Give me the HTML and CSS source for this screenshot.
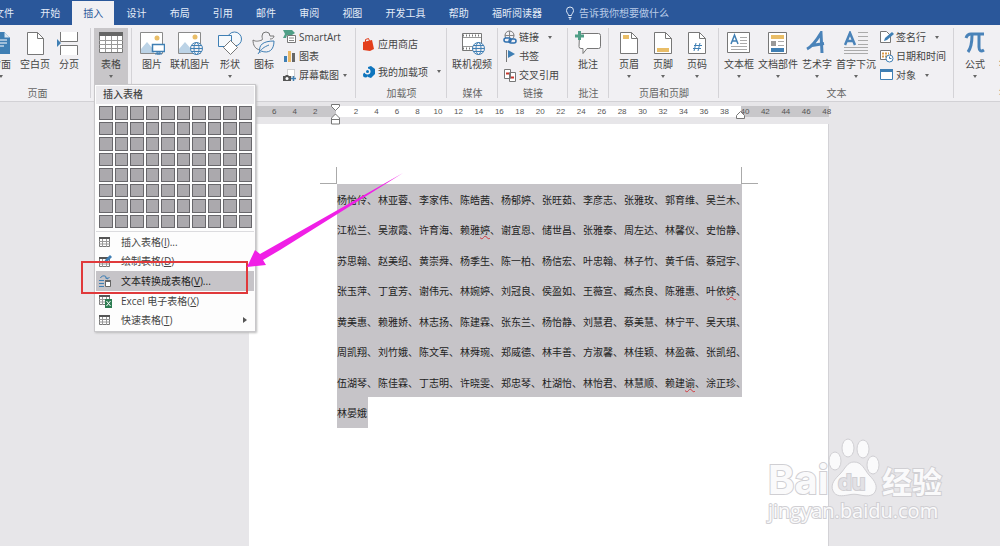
FILE: index.html
```html
<!DOCTYPE html>
<html lang="zh-CN">
<head>
<meta charset="utf-8">
<title>插入表格</title>
<link rel="stylesheet" href="styles.css">
</head>
<body>
<div class="app">
  <header class="titlebar">
    <nav class="tabs">
      <button class="tab tab-file">文件</button>
      <button class="tab">开始</button>
      <button class="tab tab-active">插入</button>
      <button class="tab">设计</button>
      <button class="tab">布局</button>
      <button class="tab">引用</button>
      <button class="tab">邮件</button>
      <button class="tab">审阅</button>
      <button class="tab">视图</button>
      <button class="tab">开发工具</button>
      <button class="tab">帮助</button>
      <button class="tab">福昕阅读器</button>
    </nav>
    <label class="tell">
      <svg width="10" height="14" viewBox="0 0 10 14" fill="none" stroke="#dfe8f6"><path d="M3.500 9.500C3.500 7.500 1.500 7 1.500 4.500a3.500 3.500 0 0 1 7 0C8.500 7 6.500 7.500 6.500 9.500zM3.500 11.500h3M4 13h2"/></svg>
      <input class="tell-input" type="text" placeholder="告诉我你想要做什么" aria-label="告诉我你想要做什么">
    </label>
  </header>

  <div class="ribbon">
    <section class="group g-pages">
      <div class="tools">
        <button class="big w34">
          <svg width="24" height="24" viewBox="0 0 24 24"><path d="M3 1h12l6 6v16H3z" fill="#3f7fb4"/><path d="M15 1v6h6" fill="#dbe8f3" stroke="#3f7fb4"/><path d="M6 9h12M6 12h12M6 15h9" stroke="#fff"/></svg>
          <span>封面</span><i class="caret"></i></button>
        <button class="big w34">
          <svg width="24" height="24" viewBox="0 0 24 24"><path d="M4.500 1.500h10l6 6v16h-16z" fill="#fff" stroke="#777"/><path d="M14.500 1.500v6h6" fill="none" stroke="#777"/></svg>
          <span>空白页</span></button>
        <button class="big w34">
          <svg width="24" height="24" viewBox="0 0 24 24"><path d="M4 1h17v9H4zM4 15h17v9H4z" fill="#fff"/><path d="M3.500 1v9.500h17V1M3.500 24v-9.500h17V24" fill="none" stroke="#777"/><path d="M0 8l4 4-4 4z" fill="#3f7fb4"/></svg>
          <span>分页</span></button>
      </div>
      <div class="caption">页面</div>
    </section>

    <section class="group g-table">
      <div class="tools">
        <button class="big w34 pressed" aria-expanded="true">
          <svg width="24" height="24" viewBox="0 0 24 24"><path d="M.5 1.500h23v20H.5z" fill="#fff" stroke="#777"/><path d="M0 1h24v4H0z" fill="#666"/><path d="M0 9.500h24M0 13.500h24M0 17.500h24M6.500 5v16M12.500 5v16M18.500 5v16" stroke="#999"/></svg>
          <span>表格</span><i class="caret"></i></button>
      </div>

      <div class="menu">
        <div class="menu-title">插入表格</div>
        <div class="picker" role="grid" aria-label="插入表格">
          <i></i><i></i><i></i><i></i><i></i><i></i><i></i><i></i><i></i><i></i>
          <i></i><i></i><i></i><i></i><i></i><i></i><i></i><i></i><i></i><i></i>
          <i></i><i></i><i></i><i></i><i></i><i></i><i></i><i></i><i></i><i></i>
          <i></i><i></i><i></i><i></i><i></i><i></i><i></i><i></i><i></i><i></i>
          <i></i><i></i><i></i><i></i><i></i><i></i><i></i><i></i><i></i><i></i>
          <i></i><i></i><i></i><i></i><i></i><i></i><i></i><i></i><i></i><i></i>
          <i></i><i></i><i></i><i></i><i></i><i></i><i></i><i></i><i></i><i></i>
          <i></i><i></i><i></i><i></i><i></i><i></i><i></i><i></i><i></i><i></i>
        </div>
        <div class="menu-list">
          <button class="item">
            <svg width="14" height="14" viewBox="0 0 14 14"><path d="M1.500 2.500h10v9h-10z" fill="#fff" stroke="#777"/><path d="M1 2h11v2H1z" fill="#555"/><path d="M1 6.500h11M1 9h11M4.500 4v8M8.500 4v8" stroke="#999"/></svg>
            <span>插入表格(<u>I</u>)...</span></button>
          <button class="item">
            <svg width="14" height="14" viewBox="0 0 14 14"><path d="M1.500 3.500h10v9h-10z" fill="#fff" stroke="#777"/><path d="M1 3h9v2H1z" fill="#555"/><path d="M1 7.500h10M1 10h10M4.500 5v8M8.500 5v8" stroke="#999"/><path d="M6 9l1-3 5-5 2 2-5 5z" fill="#3f7fb4"/></svg>
            <span>绘制表格(<u>D</u>)</span></button>
          <button class="item item-active">
            <svg width="14" height="14" viewBox="0 0 14 14"><path d="M1 6.500h5M1 9.500h5M1 12.500h5" stroke="#3f7fb4"/><path d="M2.500 4c1-3 6-3 7 1M9.500 5L7 3.500M9.500 5L11.500 3" fill="none" stroke="#3f7fb4"/><path d="M7.500 6.500h5v6h-5z" fill="#fff" stroke="#666"/><path d="M7 6h6v2H7z" fill="#666"/></svg>
            <span>文本转换成表格(<u>V</u>)...</span></button>
          <button class="item">
            <svg width="14" height="14" viewBox="0 0 14 14"><path d="M1.500 1.500h10v9h-10z" fill="#fff" stroke="#777"/><path d="M1 1h11v2H1z" fill="#555"/><path d="M1 5.500h11M1 8h11M4.500 3v8M8.500 3v8" stroke="#999"/><path d="M7 5h7v9H7z" fill="#2d7d52"/><path d="M8.500 7l4 5M12.500 7l-4 5" stroke="#fff"/></svg>
            <span>Excel 电子表格(<u>X</u>)</span></button>
          <button class="item">
            <svg width="14" height="14" viewBox="0 0 14 14"><path d="M1.500 2.500h10v9h-10z" fill="#fff" stroke="#777"/><path d="M1 2h11v2H1z" fill="#555"/><path d="M1 6.500h11M1 9h11M4.500 4v8M8.500 4v8" stroke="#999"/></svg>
            <span>快速表格(<u>T</u>)</span><i class="more"></i></button>
        </div>
        <div class="highlight"></div>
      </div>
    </section>

    <section class="group g-illus">
      <div class="tools">
        <button class="big w32">
          <svg width="26" height="24" viewBox="0 0 26 24"><path d="M1.500 1.500h22v21h-22z" fill="#fff" stroke="#8a8a8a"/><path d="M2 22v-4l6-7 7 8v3z" fill="#bcd3e6"/><circle cx="18" cy="7" r="2.500" fill="#e9bd67"/><path d="M13.500 13.500h12v7h-12z" fill="#fff" stroke="#3f7fb4" stroke-width="1.500"/><path d="M18 21h3v2h-3zM16 23h7" stroke="#3f7fb4" fill="none"/></svg>
          <span>图片</span></button>
        <button class="big w44">
          <svg width="26" height="24" viewBox="0 0 26 24"><path d="M1.500 1.500h22v21h-22z" fill="#fff" stroke="#8a8a8a"/><path d="M2 22v-4l6-7 7 8v3z" fill="#bcd3e6"/><circle cx="18" cy="6" r="2.500" fill="#e9bd67"/><g fill="#f1f0f3" stroke="#3f7fb4"><circle cx="19.500" cy="17.500" r="6"/><ellipse cx="19.500" cy="17.500" rx="2.500" ry="6" fill="none"/><path d="M13.500 17.500h12M14.500 14.500h10M14.500 20.500h10" fill="none"/></g></svg>
          <span>联机图片</span></button>
        <button class="big w36">
          <svg width="26" height="24" viewBox="0 0 26 24" fill="#f5f8fb" stroke="#3f7fb4"><circle cx="17.500" cy="8" r="7"/><path d="M1.500 4.500h13v11h-13z"/><path d="M13.500 9.500l7 7-7 7-7-7z" stroke="#777" fill="#fff"/></svg>
          <span>形状</span><i class="caret"></i></button>
        <button class="big w32">
          <svg width="26" height="24" viewBox="0 0 26 24" fill="none"><path d="M2 9c3 2 6 1 9 0 1-1 0-2 0-4a4 4 0 0 1 8 0h4c0 2-2 3-4 3M2 9c0 5 2 9 7 10" stroke="#777"/><path d="M9 22c-2-8 3-12 14-12 0 9-5 13-13 10M7 23c3-5 6-7 11-9" stroke="#3f7fb4"/></svg>
          <span>图标</span></button>
        <div class="rows">
          <button class="small"><svg width="14" height="14" viewBox="0 0 14 14"><path d="M0 0h9l3 3-3 2H4l-1 3H0l2-4z" fill="#4f9e86"/><path d="M4.500 5.500h8v7h-8z" fill="#fff" stroke="#777"/><path d="M6 8h5M6 10.500h5" stroke="#888"/></svg><span>SmartArt</span></button>
          <button class="small"><svg width="14" height="14" viewBox="0 0 14 14"><path d="M1 7h3v6H1z" fill="#3f7fb4"/><path d="M5 2h3v11H5z" fill="#e9b866"/><path d="M9 4h3v9H9z" fill="#666"/></svg><span>图表</span></button>
          <button class="small"><svg width="14" height="14" viewBox="0 0 14 14"><path d="M4.500 1.500h7v7h-7z" fill="#fff" stroke="#aaa" stroke-dasharray="1 1"/><path d="M0 8h2l1-1h2l1 1h2v5H0z" fill="#555"/><circle cx="4" cy="10.500" r="1.500" fill="#fff"/><path d="M8 10.500h5M10.500 8v5" stroke="#3f7fb4" stroke-width="1.500"/></svg><span>屏幕截图</span><i class="caret"></i></button>
        </div>
      </div>
    </section>

    <section class="group g-addins">
      <div class="tools">
        <div class="rows rows-two">
          <button class="small"><svg width="14" height="14" viewBox="0 0 14 14"><path d="M1 5l9-2 2 9-4 2-7-1z" fill="#e33e1b"/><path d="M3.500 5V2.500l3-1 1 2.500" fill="none" stroke="#e33e1b"/></svg><span>应用商店</span></button>
          <button class="small"><svg width="14" height="14" viewBox="0 0 14 14" fill="#0f75bd"><path d="M6 2l3-1 4 3v5l-4 4-3-1z"/><circle cx="3.500" cy="10" r="2.500"/><circle cx="5.500" cy="6.500" r="3" fill="#f1f0f3"/><circle cx="5.500" cy="6.500" r="1.500"/></svg><span>我的加载项</span><i class="caret caret-far"></i></button>
        </div>
      </div>
      <div class="caption">加载项</div>
    </section>

    <section class="group g-media">
      <div class="tools">
        <button class="big w44">
          <svg width="26" height="24" viewBox="0 0 26 24"><path d="M3.500 2.500h19v17h-19z" fill="#fff" stroke="#777"/><path d="M4 4.500h18M4 17.500h18" stroke="#777" stroke-width="2" stroke-dasharray="1 2"/><path d="M4 6.500h18M4 15.500h18" stroke="#999"/><g fill="#f1f0f3" stroke="#3f7fb4"><circle cx="19.500" cy="17.500" r="6"/><ellipse cx="19.500" cy="17.500" rx="2.500" ry="6" fill="none"/><path d="M13.500 17.500h12M14.500 14.500h10M14.500 20.500h10" fill="none"/></g></svg>
          <span>联机视频</span></button>
      </div>
      <div class="caption">媒体</div>
    </section>

    <section class="group g-links">
      <div class="tools">
        <div class="rows">
          <button class="small"><svg width="14" height="14" viewBox="0 0 14 14" fill="none"><circle cx="6.500" cy="5.500" r="4.500" stroke="#777"/><path d="M2 5.500h9M6.500 1v9" stroke="#888"/><rect x="1" y="8" width="7" height="4" rx="2" stroke="#2f6fae" fill="#f1f0f3" stroke-width="1.500"/><rect x="6" y="9" width="7" height="4" rx="2" stroke="#2f6fae" stroke-width="1.500"/></svg><span>链接</span><i class="caret caret-far"></i></button>
          <button class="small"><svg width="14" height="14" viewBox="0 0 14 14"><path d="M3.500 1v12" stroke="#777"/><path d="M5 1l7 4-7 4z" fill="#3f7fb4"/></svg><span>书签</span></button>
          <button class="small"><svg width="14" height="14" viewBox="0 0 14 14"><path d="M1.500 1.500h6v9h-6zM6.500 4.500h6v9h-6z" fill="#fff" stroke="#777"/><path d="M3 5.500h3M8 9.500h3" stroke="#c8372d" stroke-width="2"/></svg><span>交叉引用</span></button>
        </div>
      </div>
      <div class="caption">链接</div>
    </section>

    <section class="group g-comment">
      <div class="tools">
        <button class="big w34">
          <svg width="26" height="24" viewBox="0 0 26 24"><path d="M4.500 4.500q0-2 2-2h17q2 0 2 2v11q0 2-2 2H12l-4 5v-5H6q-2 0-2-2z" fill="#fff" stroke="#777"/><path d="M0 5h9M4.500 0v9" stroke="#4f9e86" stroke-width="3"/></svg>
          <span>批注</span></button>
      </div>
      <div class="caption">批注</div>
    </section>

    <section class="group g-header">
      <div class="tools">
        <button class="big w34">
          <svg width="24" height="24" viewBox="0 0 24 24"><path d="M3.500 1.500h11l6 6v15h-17z" fill="#fff" stroke="#777"/><path d="M14.500 1.500v6h6" fill="none" stroke="#777"/><path d="M6 4h6v4H6z" fill="#e9bd67"/></svg>
          <span>页眉</span><i class="caret"></i></button>
        <button class="big w34">
          <svg width="24" height="24" viewBox="0 0 24 24"><path d="M3.500 1.500h11l6 6v15h-17z" fill="#fff" stroke="#777"/><path d="M14.500 1.500v6h6" fill="none" stroke="#777"/><path d="M6 17h12v4H6z" fill="#e9bd67"/></svg>
          <span>页脚</span><i class="caret"></i></button>
        <button class="big w34">
          <svg width="24" height="24" viewBox="0 0 24 24"><path d="M3.500 1.500h11l6 6v15h-17z" fill="#fff" stroke="#777"/><path d="M14.500 1.500v6h6" fill="none" stroke="#777"/><path d="M11 12l-2 8M15 12l-2 8M9 14.500h8M8 17.500h8" stroke="#3f7fb4"/></svg>
          <span>页码</span><i class="caret"></i></button>
      </div>
      <div class="caption">页眉和页脚</div>
    </section>

    <section class="group g-text">
      <div class="tools">
        <button class="big w36">
          <svg width="24" height="24" viewBox="0 0 24 24"><path d="M.5 1.500h22v20H.5z" fill="#fff" stroke="#777"/><path d="M4 13l3.500-9 3.500 9M5 10h5" fill="none" stroke="#3f7fb4" stroke-width="1.500"/><path d="M13 6.500h7M13 9.500h7M13 12.500h7M4 15.500h16M4 18.500h16" stroke="#aaa"/></svg>
          <span>文本框</span><i class="caret"></i></button>
        <button class="big w42">
          <svg width="24" height="24" viewBox="0 0 24 24"><path d="M2.500 1.500h18v21h-18z" fill="#fff" stroke="#777"/><path d="M5 4h13v4H5z" fill="#e9bd67"/><path d="M5 10h5v5H5z" fill="#999"/><path d="M12 10.500h6M12 14.500h6" stroke="#aaa"/><path d="M5 17h13v4H5z" fill="#3f7fb4"/></svg>
          <span>文档部件</span><i class="caret"></i></button>
        <button class="big w36">
          <svg width="24" height="24" viewBox="0 0 24 24"><path d="M2 18C8 15 13 7 16 2l1 20M7 14.500l12-2" fill="none" stroke="#4a83b9" stroke-width="3"/></svg>
          <span>艺术字</span><i class="caret"></i></button>
        <button class="big w42">
          <svg width="24" height="24" viewBox="0 0 24 24"><path d="M1 14L6 2l5 12M3 10h6" fill="none" stroke="#4a83b9" stroke-width="2.500"/><path d="M14 1.500h10M14 5.500h10M14 9.500h10M14 13.500h10M0 16.500h24M0 19.500h24M0 22.500h24" stroke="#aaa"/></svg>
          <span>首字下沉</span><i class="caret"></i></button>
        <div class="rows">
          <button class="small"><svg width="14" height="14" viewBox="0 0 14 14"><path d="M.5 1.500h6l4 4v7H.5z" fill="#fff" stroke="#777"/><path d="M4 11l1-3 7-6 2 2-7 6z" fill="#3f7fb4"/></svg><span>签名行</span><i class="caret caret-far"></i></button>
          <button class="small"><svg width="14" height="14" viewBox="0 0 14 14"><path d="M.5 1.500h10v9H.5z" fill="#fff" stroke="#777"/><path d="M2 4.500h7M2 7.500h7" stroke="#d99b48" stroke-width="2" stroke-dasharray="2 1"/><circle cx="9.500" cy="9.500" r="3.500" fill="#fff" stroke="#3f7fb4"/><path d="M9.500 7.500v2h2" fill="none" stroke="#3f7fb4"/></svg><span>日期和时间</span></button>
          <button class="small"><svg width="14" height="14" viewBox="0 0 14 14"><path d="M.5 1.500h12v10H.5z" fill="#fff" stroke="#3f7fb4"/><path d="M0 1h13v3H0z" fill="#3f7fb4"/></svg><span>对象</span><i class="caret caret-far"></i></button>
        </div>
      </div>
      <div class="caption">文本</div>
    </section>

    <section class="group g-symbols">
      <div class="tools">
        <button class="big w34">
          <svg width="24" height="24" viewBox="0 0 24 24" fill="none" stroke="#4a83b9"><path d="M3 7c1-3 2-4 5-4h13" stroke-width="3"/><path d="M9 4c0 7-1 13-4 17" stroke-width="3"/><path d="M16 4v12c0 4 2 5 5 3" stroke-width="3"/></svg>
          <span>公式</span><i class="caret"></i></button>
        <button class="big w34">
          <svg width="24" height="24" viewBox="0 0 24 24"><path d="M3 21h6v-3C4 14 4 3 12 3s8 11 3 15v3h6" fill="none" stroke="#4a83b9" stroke-width="3"/></svg>
          <span>符号</span><i class="caret"></i></button>
      </div>
      <div class="caption">符号</div>
    </section>
  </div>

  <main class="workspace">
    <div class="sheet-column">
      <div class="ruler">
        <div class="ruler-body"></div>
        <div class="ticks">
          <span>6</span><span>4</span><span>2</span><span></span><span>2</span><span>4</span><span>6</span><span>8</span><span>10</span><span>12</span><span>14</span><span>16</span><span>18</span><span>20</span><span>22</span><span>24</span><span>26</span><span>28</span><span>30</span><span>32</span><span>34</span><span>36</span><span>38</span><span>40</span><span>42</span><span>44</span><span>46</span><span>48</span>
        </div>
        <svg class="indent indent-left" width="9" height="22" viewBox="0 0 9 22" fill="#fff" stroke="#777"><path d="M.5 1.500h8v2l-4 4-4-4zM.5 21v-6l4-4 4 4v6zM.5 16.500h8"/></svg>
        <svg class="indent indent-right" width="9" height="8" viewBox="0 0 9 8" fill="#fff" stroke="#777"><path d="M.5 7.500v-3l4-4 4 4v3z"/></svg>
      </div>
      <article class="sheet">
        <div class="margin-marks"><i class="mark mark-left"></i><i class="mark mark-right"></i></div>
        <p class="line"><span>杨怡伶、</span><span>林亚蓉、</span><span>李家伟、</span><span>陈皓茜、</span><span>杨郁婷、</span><span>张旺茹、</span><span>李彦志、</span><span>张雅玫、</span><span>郭育维、</span><span>吴兰木、</span></p>
        <p class="line"><span>江松兰、</span><span>吴淑霞、</span><span>许育海、</span><span>赖雅<em>婷</em>、</span><span>谢宜恩、</span><span>储世昌、</span><span>张雅泰、</span><span>周左达、</span><span>林馨仪、</span><span>史怡静、</span></p>
        <p class="line"><span>苏思翰、</span><span>赵美绍、</span><span>黄崇舜、</span><span>杨季生、</span><span>陈一柏、</span><span>杨信宏、</span><span>叶忠翰、</span><span>林子竹、</span><span>黄千倩、</span><span>蔡冠宇、</span></p>
        <p class="line"><span>张玉萍、</span><span>丁宜芳、</span><span>谢伟元、</span><span>林婉婷、</span><span>刘冠良、</span><span>侯盈如、</span><span>王薇宣、</span><span>臧杰良、</span><span>陈雅惠、</span><span>叶依<em>婷</em>、</span></p>
        <p class="line"><span>黄美惠、</span><span>赖雅娇、</span><span>林志扬、</span><span>陈建霖、</span><span>张东兰、</span><span>杨怡静、</span><span>刘慧君、</span><span>蔡美慧、</span><span>林宁平、</span><span>吴天琪、</span></p>
        <p class="line"><span>周凯翔、</span><span>刘竹娥、</span><span>陈文军、</span><span>林舜琬、</span><span>郑威德、</span><span>林丰善、</span><span>方淑馨、</span><span>林佳颖、</span><span>林盈薇、</span><span>张凯绍、</span></p>
        <p class="line"><span>伍湖琴、</span><span>陈佳霖、</span><span>丁志明、</span><span>许晓雯、</span><span>郑忠琴、</span><span>杜湖怡、</span><span>林怡君、</span><span>林慧顺、</span><span>赖建<em>谕</em>、</span><span>涂正珍、</span></p>
        <p class="line line-last"><span>林晏娥</span></p>
      </article>
    </div>
  </main>

  <svg class="arrow" width="160" height="100" viewBox="0 0 160 100"><path d="M157 1L14 82 9 78 1 95l19-2-3-5 17-10z" fill="#f01fe6"/></svg>

  <svg class="watermark" width="190" height="90" viewBox="0 0 190 90">
    <g fill="#fafafb" stroke="#d0cfd3">
      <text class="wm-logo" x="4" y="59">Bai</text>
      <ellipse cx="71" cy="26" rx="6" ry="9"/><ellipse cx="84" cy="13" rx="6" ry="9"/><ellipse cx="99" cy="14" rx="6" ry="9"/><ellipse cx="109" cy="30" rx="6" ry="9"/>
      <path d="M90 27c8 0 10 7 15 13 6 6 9 11 6 17-3 5-10 4-15 3-4-1-8-1-12 0-6 1-12 2-15-4-3-7 2-12 7-17s7-12 14-12z"/>
      <text class="wm-cn" x="118" y="58">经验</text>
      <text class="wm-url" x="4" y="83">jingyan.baidu.com</text>
      <text class="wm-du" x="74" y="55">du</text>
    </g>
  </svg>
</div>
</body>
</html>
```

FILE: styles.css
```css
* { box-sizing: border-box; }

body {
  margin: 0;
  font: 10px/14px "Open Sans", "Noto Sans CJK SC", sans-serif;
  color: #444;
  background: #e7e6e9;
}

button {
  margin: 0;
  padding: 0;
  border: 0;
  background: none;
  font: inherit;
  color: inherit;
  white-space: nowrap;
}

.app {
  position: relative;
  display: flex;
  flex-direction: column;
  min-height: 100vh;
  overflow: hidden;
}

/* Tabs */
.titlebar {
  display: flex;
  align-items: flex-end;
  height: 25px;
  background: #2a579a;
}

.tabs {
  display: flex;
  flex: none;
  justify-content: space-between;
  width: 570px;
  margin-left: -17px;
}

.tab {
  height: 24px;
  padding: 0 11px;
  color: #e4ecf8;
}

.tab-file { margin-right: 3px; }
.tab-active { background: #f1f0f3; color: #2a579a; }

.tell {
  display: flex;
  flex: 1;
  align-items: center;
  gap: 4px;
  height: 24px;
  margin-left: 12px;
}

.tell-input {
  flex: 1;
  min-width: 0;
  padding: 0;
  border: 0;
  background: none;
  font: inherit;
  color: #fff;
}

.tell-input::placeholder { color: #b9cbe8; opacity: 1; }

/* Ribbon */
.ribbon {
  display: flex;
  height: 77px;
  background: #f1f0f3;
  border-bottom: 1px solid #d2d1d5;
}

.group {
  position: relative;
  display: flex;
  flex: none;
  flex-direction: column;
  padding-top: 3px;
}

.group::after {
  content: "";
  position: absolute;
  top: 3px;
  right: 0;
  bottom: 3px;
  border-right: 1px solid #d4d3d7;
}

.tools { display: flex; height: 56px; }
.caption { margin-top: 2px; text-align: center; color: #666; }

.g-pages { width: 107px; margin-left: -16px; }
.g-table { width: 41px; padding-left: 3px; }
.g-illus { width: 224px; padding-left: 4px; }
.g-addins { width: 91px; }
.g-media { width: 51px; }
.g-links { width: 70px; }
.g-comment { width: 41px; }
.g-header { width: 110px; }
.g-text { width: 235px; }
.g-symbols { width: 110px; }

.g-addins .tools { padding-left: 5px; }
.g-media .tools, .g-comment .tools { padding-left: 3px; }
.g-links .tools { padding-left: 4px; }
.g-header .tools { padding-left: 3px; }
.g-text .tools { padding-left: 2px; }
.g-symbols .tools { padding-left: 4px; }

.big {
  display: flex;
  flex: none;
  flex-direction: column;
  align-items: center;
  padding-top: 3px;
}

.big span { margin-top: 2px; }
.big .caret { margin-top: 4px; }
.pressed { background: #c8c6c9; }

.w32 { width: 32px; }
.w34 { width: 34px; }
.w36 { width: 36px; }
.w42 { width: 42px; }
.w44 { width: 44px; }

.caret {
  border: 2px solid transparent;
  border-top: 3px solid #666;
  border-bottom: 0;
}

.rows {
  display: flex;
  flex-direction: column;
  justify-content: space-between;
  padding-left: 3px;
}

.g-links .rows, .g-addins .rows { padding-left: 1px; }
.rows-two { padding-top: 3px; }

.small {
  display: flex;
  align-items: center;
  gap: 2px;
  height: 18px;
}

.rows-two .small { height: 25px; }
.small .caret { margin-left: 2px; }
.small .caret-far { margin-left: 7px; }

/* Table menu */
.menu {
  position: absolute;
  z-index: 2;
  top: 59px;
  left: 3px;
  width: 162px;
  padding: 1px;
  background: #fdfdfd;
  border: 1px solid #c8c7ca;
  box-shadow: 1px 1px 2px #bbb;
}

.menu-title {
  padding: 1px 7px 3px;
  background: #ebeaed;
  font-weight: 500;
}

.picker {
  display: grid;
  grid-template-columns: repeat(10, 1fr);
  grid-auto-rows: 1fr;
  gap: 2px;
  height: 128px;
  padding: 2px 2px 3px 3px;
  border-bottom: 1px solid #dcdcdf;
}

.picker i { background: #aba9ad; border: 1px solid #68676b; }

.menu-list {
  display: grid;
  grid-auto-rows: 1fr;
  height: 98px;
}

.item {
  display: flex;
  align-items: center;
  gap: 9px;
  padding-left: 2px;
  text-align: left;
}

.item-active { background: #c6c4c8; color: #222; }

.more {
  margin: 0 7px 0 auto;
  border: 3px solid transparent;
  border-left: 4px solid #555;
  border-right: 0;
}

.highlight {
  position: absolute;
  top: 176px;
  left: -14px;
  width: 167px;
  height: 33px;
  border: 2px solid #e0393b;
}

/* Document */
.workspace { display: flex; flex: 1; }

.sheet-column {
  display: flex;
  flex: none;
  flex-direction: column;
  width: 580px;
  margin-left: 249px;
}

.ruler {
  position: relative;
  height: 11px;
  margin: 4px 0 7px;
  background: #c8c7ca;
}

.ruler-body { height: 11px; margin: 0 88px 0 87px; background: #fff; }

.ticks {
  position: absolute;
  top: 0;
  right: -8px;
  left: 15px;
  display: grid;
  grid-template-columns: repeat(28, 1fr);
  font: 8px/12px "Liberation Sans", sans-serif;
  text-align: center;
  color: #555;
}

.indent { position: absolute; }
.indent-left { top: -3px; left: 82px; }
.indent-right { top: 5px; left: 487px; }

.sheet {
  flex: 1;
  padding: 43px 87px 20px 88px;
  background: #fff;
  border-right: 1px solid #d3d2d6;
}

.margin-marks {
  display: flex;
  justify-content: space-between;
  margin: 0 -17px;
}

.mark { width: 17px; height: 17px; border-bottom: 1px solid #aaa; }
.mark-left { border-right: 1px solid #aaa; }
.mark-right { border-left: 1px solid #aaa; }

.line {
  display: grid;
  grid-template-columns: repeat(10, 41px);
  width: 405px;
  margin: 0;
  padding-top: 2px;
  background: #c6c4c8;
  line-height: 28px;
  white-space: nowrap;
  color: #222;
}

.line:nth-of-type(even) { line-height: 29px; }
.line-last { display: block; width: 31px; }

.line em {
  font-style: normal;
  text-decoration: underline wavy #d0393f 1px;
  text-underline-offset: 1px;
}

/* Overlays */
.arrow { position: absolute; z-index: 3; top: 172px; left: 246px; }
.watermark { position: absolute; top: 435px; left: 764px; }
.watermark text { paint-order: stroke; stroke-width: 2px; }
.watermark .wm-logo, .watermark .wm-du { font-family: Inter, sans-serif; font-weight: 700; }
.wm-logo { font-size: 40px; }
.watermark .wm-du { font-size: 22px; fill: #e2e1e5; }
.wm-cn { font: 700 30px "Noto Sans CJK SC", sans-serif; }
.wm-url { font: 20px "Open Sans", sans-serif; }
```
